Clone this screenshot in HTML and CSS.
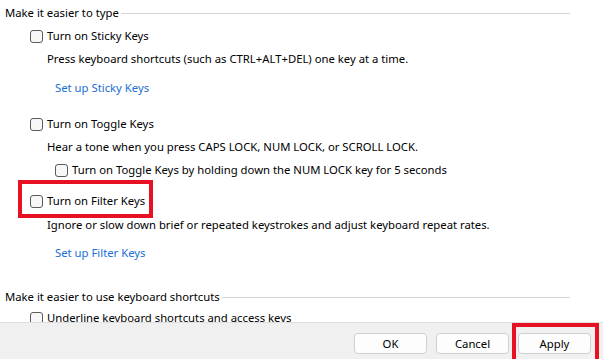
FILE: index.html
```html
<!DOCTYPE html>
<html lang="en">
<head>
    <meta charset="UTF-8">
    <title>Make the keyboard easier to use</title>
    <link rel="stylesheet" href="styles.css">
</head>
<body>
    <div class="panel">
        <div class="group-title">Make it easier to type</div>

        <div class="row check sticky">
            <span class="box"></span>
            <span>Turn on Sticky Keys</span>
        </div>
        <div class="row note press">Press keyboard shortcuts (such as CTRL+ALT+DEL) one key at a time.</div>
        <div class="row link setup-sticky"><a href="#">Set up Sticky Keys</a></div>

        <div class="row check toggle">
            <span class="box"></span>
            <span>Turn on Toggle Keys</span>
        </div>
        <div class="row note hear">Hear a tone when you press CAPS LOCK, NUM LOCK, or SCROLL LOCK.</div>
        <div class="row check sub">
            <span class="box"></span>
            <span>Turn on Toggle Keys by holding down the NUM LOCK key for 5 seconds</span>
        </div>

        <div class="row check filter marked">
            <span class="box"></span>
            <span>Turn on Filter Keys</span>
        </div>
        <div class="row note ignore">Ignore or slow down brief or repeated keystrokes and adjust keyboard repeat rates.</div>
        <div class="row link setup-filter"><a href="#">Set up Filter Keys</a></div>

        <div class="group-title shortcuts">Make it easier to use keyboard shortcuts</div>
        <div class="row check underline">
            <span class="box"></span>
            <span>Underline keyboard shortcuts and access keys</span>
        </div>
    </div>

    <div class="footer">
        <button class="btn">OK</button>
        <button class="btn">Cancel</button>
        <button class="btn marked-btn">Apply</button>
    </div>
</body>
</html>
```

FILE: styles.css
```css
body {
    font-family: 'Noto Sans', 'Liberation Sans', sans-serif;
    font-size: 11.3px;
    color: #000;
    margin: 0;
    padding: 0;
    background-color: #fff;
    overflow: hidden;
}

.panel {
    height: 322px;
    overflow: hidden;
    padding-top: 5px;
    box-sizing: border-box;
}

.group-title {
    display: flex;
    align-items: center;
    height: 16px;
    line-height: 16px;
    padding-left: 5px;
    margin-right: 33px;
}

.group-title::after {
    content: '';
    flex: 1;
    height: 1px;
    margin-left: 2px;
    background-color: #d5d5d5;
}

.row {
    height: 16px;
    line-height: 16px;
    white-space: nowrap;
}

.check {
    display: flex;
    align-items: center;
    padding-left: 30px;
}

.box {
    width: 11px;
    height: 11px;
    border: 1px solid #5a5a5a;
    border-radius: 3px;
    background-color: #f7f7f7;
    margin-right: 4px;
}

.note {
    padding-left: 47px;
}

.link {
    padding-left: 55px;
}

.link a {
    color: #1a6fd3;
    text-decoration: none;
}

.sticky { margin-top: 7px; }
.press { margin-top: 7px; }
.setup-sticky { margin-top: 13px; }
.toggle { margin-top: 20px; }
.hear { margin-top: 7px; }
.sub { margin-top: 7px; padding-left: 55px; }
.filter { margin-top: 15px; }
.ignore { margin-top: 8px; }
.setup-filter { margin-top: 12px; }
.shortcuts { margin-top: 28px; }
.underline { margin-top: 5px; }

.marked {
    position: relative;
}

.marked::after {
    content: '';
    position: absolute;
    left: 18px;
    top: -13px;
    width: 127px;
    height: 30px;
    border: 4px solid #e81123;
}

.footer {
    height: 37px;
    border-top: 1px solid #dfdfdf;
    background-color: #f0f0f0;
    display: flex;
    justify-content: flex-end;
    align-items: flex-start;
    gap: 9px;
    padding: 10px 12px 0 0;
    box-sizing: border-box;
}

.btn {
    position: relative;
    width: 73px;
    height: 21px;
    padding: 0;
    font-family: 'Noto Sans', 'Liberation Sans', sans-serif;
    font-size: 11.3px;
    color: #000;
    background-color: #fdfdfd;
    border: 1px solid #d0d0d0;
    border-radius: 4px;
}

.marked-btn::after {
    content: '';
    position: absolute;
    left: -7px;
    top: -11px;
    right: -9px;
    bottom: -14px;
    border: 4px solid #e81123;
}
```
